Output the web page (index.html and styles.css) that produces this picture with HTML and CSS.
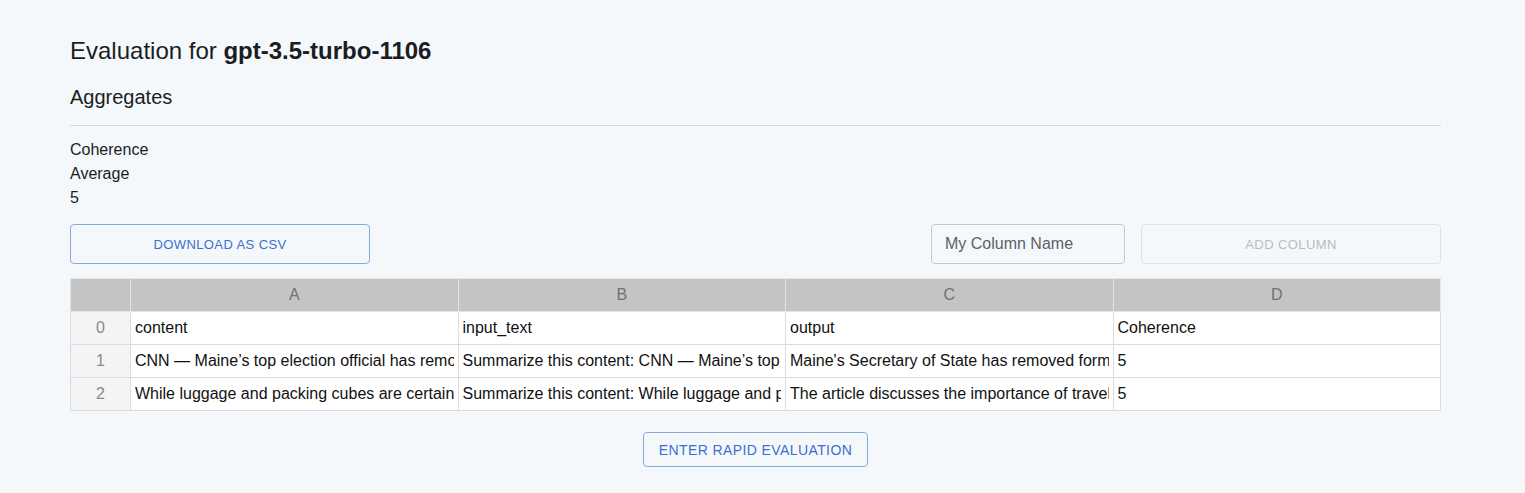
FILE: index.html
```html
<!DOCTYPE html>
<html>
<head>
<meta charset="utf-8">
<link rel="stylesheet" href="styles.css">
</head>
<body>
<main class="page">
  <h1 class="title">Evaluation for <strong>gpt-3.5-turbo-1106</strong></h1>
  <h2 class="subtitle">Aggregates</h2>
  <hr class="rule">
  <div class="agg">
    <div>Coherence</div>
    <div>Average</div>
    <div>5</div>
  </div>
  <div class="toolbar">
    <button class="btn btn-outline btn-download">DOWNLOAD AS CSV</button>
    <div class="right-tools">
      <input class="col-input" type="text" placeholder="My Column Name">
      <button class="btn btn-disabled btn-add">ADD COLUMN</button>
    </div>
  </div>
  <table class="grid">
    <colgroup>
      <col class="c-idx"><col class="c-data"><col class="c-data"><col class="c-data"><col class="c-data">
    </colgroup>
    <thead>
      <tr><th></th><th>A</th><th>B</th><th>C</th><th>D</th></tr>
    </thead>
    <tbody>
      <tr><td class="idx">0</td><td>content</td><td>input_text</td><td>output</td><td>Coherence</td></tr>
      <tr><td class="idx">1</td><td><div class="cell">CNN — Maine’s top election official has removed former President Donald Trump</div></td><td><div class="cell">Summarize this content: CNN — Maine’s top election official</div></td><td><div class="cell">Maine's Secretary of State has removed former President</div></td><td>5</td></tr>
      <tr><td class="idx">2</td><td><div class="cell">While luggage and packing cubes are certainly important</div></td><td><div class="cell">Summarize this content: While luggage and packing cubes</div></td><td><div class="cell">The article discusses the importance of travel accessories</div></td><td>5</td></tr>
    </tbody>
  </table>
  <div class="bottom">
    <button class="btn btn-outline btn-rapid">ENTER RAPID EVALUATION</button>
  </div>
</main>
</body>
</html>
```
FILE: styles.css
```css
html, body {
  margin: 0;
  padding: 0;
  background: #f5f8fb;
}
body {
  font-family: "Liberation Sans", Arial, sans-serif;
  color: #1f2328;
}
.page {
  padding: 37px 84px 0 70px;
}
.title {
  margin: 0;
  font-size: 24px;
  font-weight: 400;
  line-height: 28px;
  color: #1a1d21;
}
.title strong {
  font-weight: 700;
}
.subtitle {
  margin: 20px 0 0;
  font-size: 20px;
  font-weight: 400;
  line-height: 24px;
  color: #1a1d21;
}
.rule {
  margin: 16px 0 0;
  border: 0;
  border-top: 1px solid #d5d9de;
  height: 0;
}
.agg {
  margin-top: 12px;
  font-size: 16px;
  line-height: 24px;
  color: #1a1d21;
}
.toolbar {
  margin-top: 14px;
  display: flex;
  justify-content: space-between;
  align-items: center;
}
.right-tools {
  display: flex;
  gap: 16px;
  align-items: center;
}
.btn {
  font-family: "Liberation Sans", Arial, sans-serif;
  height: 40px;
  border-radius: 4px;
  background: transparent;
  font-size: 13px;
  letter-spacing: 0.4px;
  padding: 0;
}
.btn-outline {
  border: 1px solid #88a9df;
  color: #3b6fd0;
}
.btn-download {
  width: 300px;
}
.btn-disabled {
  border: 1px solid #dfe3e8;
  color: #b6bcc3;
}
.btn-add {
  width: 300px;
}
.col-input {
  box-sizing: border-box;
  width: 194px;
  height: 40px;
  border: 1px solid #c4c8cd;
  border-radius: 4px;
  background: transparent;
  padding: 0 13px;
  font-family: "Liberation Sans", Arial, sans-serif;
  font-size: 16px;
  color: #1a1d21;
}
.col-input::placeholder {
  color: #5c6166;
}
.grid {
  margin-top: 14px;
  width: 100%;
  border-collapse: collapse;
  table-layout: fixed;
  font-size: 16px;
}
.c-idx { width: 60px; }
.grid th, .grid td {
  border: 1px solid #d9dce0;
  height: 33px;
  padding: 0 4px;
  white-space: nowrap;
  overflow: hidden;
  box-sizing: border-box;
}
.cell {
  overflow: hidden;
  white-space: nowrap;
}
.grid th {
  background: #c4c4c4;
  border-color: #e4e4e4;
  color: #717171;
  font-weight: 400;
  text-align: center;
}
.grid td {
  background: #ffffff;
  color: #111111;
}
.grid td.idx {
  background: #f4f4f4;
  color: #8a8a8a;
  text-align: center;
}
.bottom {
  display: flex;
  justify-content: center;
  margin-top: 21px;
}
.btn-rapid {
  width: 225px;
  height: 35px;
  font-size: 14px;
}
```
